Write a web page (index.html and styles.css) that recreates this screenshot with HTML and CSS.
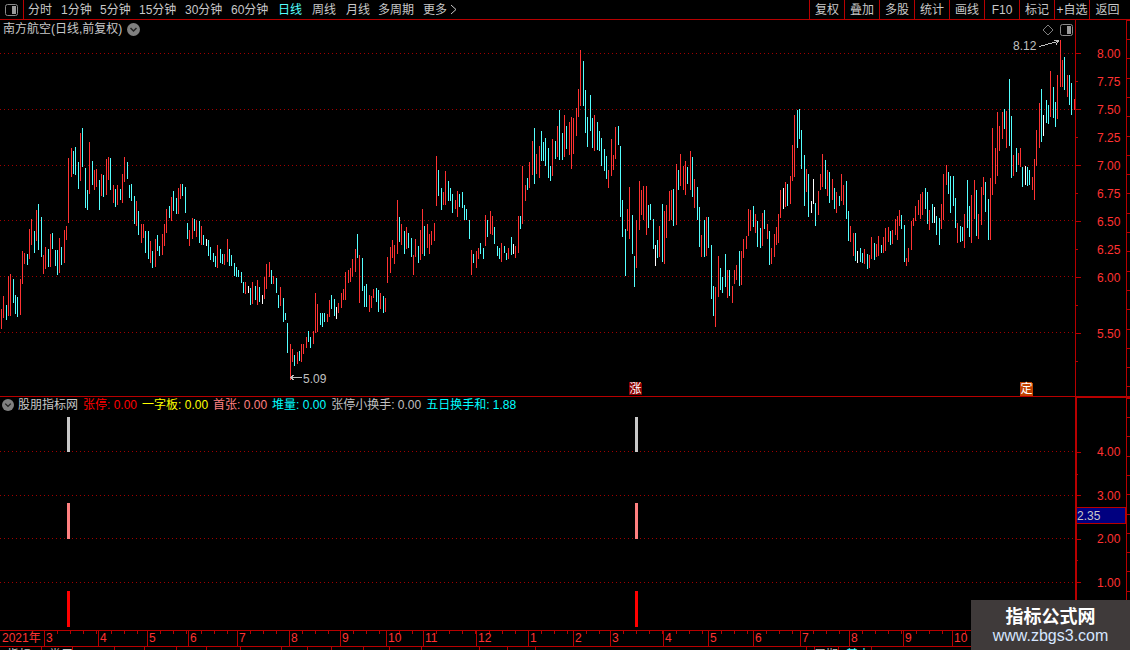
FILE: index.html
```html
<!DOCTYPE html>
<html lang="zh">
<head>
<meta charset="utf-8">
<title>南方航空</title>
<link rel="stylesheet" href="styles.css">
</head>
<body>
<div class="screen">
  <svg class="defs" width="0" height="0"><defs><pattern id="dots" width="4" height="1" patternUnits="userSpaceOnUse"><rect class="dot" width="1" height="1"/></pattern></defs></svg>
  <header class="toolbar">
    <div class="toggle-cell">
      <svg class="icon-panel" width="13" height="12" viewBox="0 0 13 12"><rect class="ip-frame" x="0.5" y="0.5" width="12" height="11" rx="2"/><rect class="ip-fill" x="7" y="2" width="4" height="8"/></svg>
    </div>
    <nav class="periods">
      <span>分时</span><span>1分钟</span><span>5分钟</span><span>15分钟</span><span>30分钟</span><span>60分钟</span><span class="active">日线</span><span>周线</span><span>月线</span><span>多周期</span><span class="more">更多 <svg width="7" height="11" viewBox="0 0 7 11"><path class="more-arrow" d="M1 1l5 4.5-5 4.5"/></svg></span>
    </nav>
    <div class="actions">
      <span>复权</span><span>叠加</span><span>多股</span><span>统计</span><span>画线</span><span>F10</span><span>标记</span><span>+自选</span><span class="last">返回</span>
    </div>
  </header>

  <section class="upper">
    <svg class="chart" width="1130" height="376" viewBox="0 20 1130 376">
      <g class="grid">
        <rect y="53" width="1075" height="1"/><rect y="109" width="1075" height="1"/><rect y="165" width="1075" height="1"/><rect y="220" width="1075" height="1"/><rect y="276" width="1075" height="1"/><rect y="332" width="1075" height="1"/>
      </g>
      <g class="bars" transform="translate(0.17 120) scale(0.33333)">
        <path class="r" d="M4 567V627M10 528V594M25 468V588M31 462V588M61 477V585M67 393V492M73 399V432M88 327V417M94 297V375M109 270V363M130 405V462M136 381V447M151 342V441M178 354V459M193 330V429M199 318V360M205 114V309M214 84V171M241 39V183M268 66V222M283 150V210M289 147V201M304 162V228M319 117V225M325 111V180M340 195V249M352 195V255M367 162V249M373 111V186M409 243V318M424 312V369M430 312V354M451 363V429M466 357V441M487 342V405M493 312V378M499 267V339M514 231V303M535 204V282M541 192V237M568 330V378M577 294V357M589 300V351M604 318V375M652 375V444M673 402V435M682 357V426M736 486V522M757 486V552M772 480V555"/>
        <path class="c" d="M19 555V600M40 477V549M46 525V582M52 531V591M82 402V435M103 333V399M115 252V390M124 291V411M145 387V441M157 339V387M166 390V438M172 390V465M184 381V435M220 93V162M226 81V165M235 126V207M247 24V141M256 144V264M262 210V270M277 123V195M298 180V270M310 165V231M331 114V210M346 207V261M361 207V240M382 126V177M388 195V234M394 192V243M403 228V312M415 273V345M436 333V399M445 333V417M457 393V444M472 345V393M478 378V408M508 258V294M520 213V273M529 234V282M547 192V228M556 201V279M562 309V357M583 297V333M598 303V369M610 345V375M625 360V408M631 381V420M640 399V426M646 408V441M661 387V429M667 402V432M688 387V438M694 405V438M703 429V468M709 441V471M715 450V471M724 456V489M730 486V519M751 504V555M766 498V540M778 501V546"/>
        <path class="w" d="M619 357V378M745 498V519"/>
      </g>
      <g class="bars" transform="translate(260.17 180) scale(0.33333)">
        <path class="r" d="M13 291V357M19 252V327M28 246V291M40 288V312M61 321V378M91 492V600M97 507V546M112 516V552M124 492V546M130 492V522M139 471V504M160 453V492M166 339V459M172 372V456M202 402V426M208 360V411M235 369V399M244 339V384M250 327V360M256 276V360M265 270V309M271 264V306M277 237V291M286 207V276M298 225V369M328 345V396M334 348V384M340 327V354M361 339V387M376 354V396M382 231V309M391 201V279M397 180V234M403 195V252M412 60V222M424 132V195M439 141V207M460 225V285M466 177V231M481 150V240M487 87V222M502 132V204M508 162V222M514 153V195M523 129V183M529 -72V78M550 36V75M556 -27V75M586 60V87M592 33V111M634 210V285M649 213V264M655 204V237M676 105V198M691 93V162M697 108V165M724 189V246M745 204V237M766 198V234M775 108V219"/>
        <path class="c" d="M34 270V312M49 294V339M55 345V384M70 354V426M76 399V420M82 429V519M103 525V558M118 513V543M145 453V486M151 471V504M181 399V435M187 399V441M193 399V426M214 345V387M223 357V408M292 162V234M307 234V333M313 318V381M319 312V381M349 324V366M355 330V396M370 348V399M418 111V186M433 153V222M445 159V204M454 174V231M475 198V249M493 138V228M535 -30V48M544 24V90M565 3V63M571 24V63M577 42V99M598 42V81M607 36V84M613 75V120M619 87V120M628 120V177M640 222V249M661 189V222M670 204V237M682 120V171M703 141V192M712 198V228M718 204V237M733 198V219M739 219V240M754 171V225"/>
        <path class="w" d="M7 345V372M229 381V417M760 192V222"/>
      </g>
      <g class="bars" transform="translate(520.17 40) scale(0.33333)">
        <path class="r" d="M7 378V552M16 435V483M28 366V444M37 303V405M49 342V402M58 318V414M97 297V408M112 258V351M133 225V351M148 246V345M154 231V387M160 234V342M169 204V288M175 147V231M181 30V198M223 225V333M265 390V444M274 297V408M280 345V390M286 261V357M322 507V573M328 441V597M349 540V684M358 423V570M364 450V525M370 438V540M379 438V585M418 558V651M433 513V672M439 495V594M448 453V543M454 450V540M469 372V555M481 342V438M490 378V450M496 363V465M511 333V450M523 417V504M544 585V651M559 531V648M586 741V861M595 648V771M622 690V774M637 738V789M643 690V732M649 675V720M664 633V735M670 597V654M679 588V627M685 507V588M691 510V573M706 522V579M727 519V618M742 552V597M754 624V672M763 582V651M769 561V615M775 522V609"/>
        <path class="c" d="M1 528V567M22 414V450M43 264V432M64 273V363M70 306V363M76 294V378M85 324V414M91 378V423M106 303V357M118 210V360M127 279V360M139 258V327M190 63V198M196 150V279M202 231V321M211 165V273M217 234V324M232 246V330M238 273V333M244 294V378M253 327V393M259 348V417M295 258V315M301 318V531M307 480V591M316 567V708M337 525V642M343 648V741M385 495V564M391 492V540M400 537V627M412 600V654M427 492V666M460 447V558M475 390V450M502 381V432M517 351V471M532 441V540M538 501V621M553 540V651M565 531V624M574 615V777M580 738V828M601 684V750M607 711V759M616 642V741M628 690V768M658 633V738M700 498V561M712 543V621M721 564V624M733 510V567M748 573V675"/>
        <path class="w" d="M406 615V678"/>
      </g>
      <g class="bars" transform="translate(780.17 40) scale(0.33333)">
        <path class="r" d="M1 450V534M16 426V501M31 408V492M37 315V423M43 225V411M79 387V456M115 453V525M121 402V450M127 342V441M142 390V468M157 417V480M169 456V519M184 402V483M190 435V495M211 558V606M220 579V648M253 627V672M268 645V684M274 591V657M289 612V651M295 588V648M310 591V639M316 564V633M325 561V606M337 570V612M346 537V585M352 528V600M358 510V558M379 654V678M385 624V666M394 543V630M400 534V558M406 498V543M415 480V525M421 462V537M427 456V525M448 510V570M484 492V567M490 402V540M499 375V435M532 549V609M553 522V624M574 465V609M583 420V537M595 522V597M604 441V555M610 411V465M631 414V600M637 264V465M646 324V432M652 216V408M658 258V333M667 216V297M679 213V324M700 345V408M715 339V375M721 324V381M757 411V450M763 357V480M769 270V378M778 189V324M811 93V231M832 105V237M841 0V141M847 60V141M862 105V171M883 177V210"/>
        <path class="c" d="M22 432V498M52 210V324M58 207V297M64 270V387M73 345V498M85 402V531M106 489V558M136 360V447M148 396V489M163 444V507M178 468V498M199 423V537M205 513V603M226 579V663M241 624V666M247 639V669M262 642V687M283 609V660M304 615V639M331 573V615M364 525V567M373 555V666M436 444V507M442 456V552M457 492V549M469 528V585M478 534V615M505 396V462M511 408V519M520 408V498M526 474V564M541 558V606M547 561V603M562 420V564M568 498V591M589 450V588M616 426V516M625 477V600M673 207V267M688 117V318M694 228V414M709 324V396M727 381V441M742 381V438M748 390V435M784 147V306M799 180V249M805 195V252M820 141V234M826 186V261M853 51V150M868 105V195M874 129V225"/>
        <path class="w" d="M10 444V507M94 483V519M100 417V492M232 633V669M463 501V549M736 378V435M790 225V288"/>
      </g>

      <g class="axis-lines">
        <path d="M1075.5 20V396M1126.5 20V396"/>
        <path d="M1076 53.5H1081M1076 81.5H1078M1076 109.5H1081M1076 137.5H1078M1076 165.5H1081M1076 193.5H1078M1076 221.5H1081M1076 249.5H1078M1076 277.5H1081M1076 305.5H1078M1076 333.5H1081M1076 361.5H1078"/>
        <path class="edge-ticks" d="M1128 20V396"/>
      </g>
      <g class="axis-labels">
        <text x="1097" y="58">8.00</text><text x="1097" y="86">7.75</text><text x="1097" y="114">7.50</text><text x="1097" y="142">7.25</text><text x="1097" y="170">7.00</text><text x="1097" y="198">6.75</text><text x="1097" y="226">6.50</text><text x="1097" y="254">6.25</text><text x="1097" y="282">6.00</text><text x="1097" y="338">5.50</text>
      </g>

      <g class="annot">
        <text x="1013" y="50">8.12</text>
        <path d="M1039 46.5L1058 41.5M1054 40H1059L1056 45"/>
        <text x="303" y="383">5.09</text>
        <path d="M291 377.5H302M294 375L290.5 377.5L294 380"/>
      </g>
      <path class="diamond" d="M1048 25L1053 30L1048 35L1043 30Z"/>

      <path class="flag flag-zhang" d="M629 382H640L642 384V395H629Z"/>
      <text class="flag-text" x="629.5" y="393">涨</text>
      <path class="flag flag-ding" d="M1020 382H1031L1033 384V396H1020Z"/>
      <text class="flag-text" x="1020.5" y="393">定</text>
    </svg>

    <div class="title-row">
      <span>南方航空(日线,前复权)</span>
      <svg class="chev" width="13" height="13" viewBox="0 0 13 13"><circle class="chev-bg" cx="6.5" cy="6.5" r="6.5"/><path class="chev-mark" d="M3.5 5l3 3 3-3"/></svg>
    </div>
    <svg class="icon-panel corner-icon" width="13" height="12" viewBox="0 0 13 12"><rect class="ip-frame" x="0.5" y="0.5" width="12" height="11" rx="2"/><rect class="ip-fill" x="7" y="2" width="4" height="8"/></svg>
  </section>

  <section class="lower">
    <svg class="chart" width="1130" height="233" viewBox="0 397 1130 233">
      <g class="grid">
        <rect y="451" width="1075" height="1"/><rect y="495" width="1075" height="1"/><rect y="538" width="1075" height="1"/><rect y="582" width="1075" height="1"/>
      </g>
      <rect class="sig-gray" x="67" y="417" width="3" height="35"/>
      <rect class="sig-pink" x="67" y="503" width="3" height="36"/>
      <rect class="sig-red" x="67" y="591" width="3" height="36"/>
      <rect class="sig-gray" x="635" y="417" width="3" height="35"/>
      <rect class="sig-pink" x="635" y="503" width="3" height="36"/>
      <rect class="sig-red" x="635" y="591" width="3" height="36"/>
      <g class="axis-lines">
        <rect class="axis-fill" x="1075" y="397" width="55" height="1"/>
        <rect class="axis-fill" x="1075" y="397" width="2" height="233"/>
        <path d="M1126.5 397V630"/>
        <path d="M1077 452.5H1081M1077 474.5H1078M1077 495.5H1081M1077 517.5H1078M1077 539.5H1081M1077 560.5H1078M1077 582.5H1081M1077 604.5H1078"/>
        <path class="edge-ticks" d="M1128 398V630"/>
      </g>
      <g class="axis-labels">
        <text x="1097" y="456">4.00</text><text x="1097" y="500">3.00</text><text x="1097" y="543">2.00</text><text x="1097" y="587">1.00</text>
      </g>
      <rect class="badge" x="1076.5" y="507.5" width="49" height="16"/>
      <text class="badge-text" x="1077" y="520">2.35</text>
    </svg>

    <div class="legend">
      <svg class="chev" width="12" height="12" viewBox="0 0 13 13"><circle class="chev-bg" cx="6.5" cy="6.5" r="6.5"/><path class="chev-mark" d="M3.5 5l3 3 3-3"/></svg>
      <span class="legend-name">股朋指标网</span>
      <span class="l-red">张停: 0.00</span>
      <span class="l-yellow">一字板: 0.00</span>
      <span class="l-pink">首张: 0.00</span>
      <span class="l-cyan">堆量: 0.00</span>
      <span class="l-gray">张停小换手: 0.00</span>
      <span class="l-cyan">五日换手和: 1.88</span>
    </div>
  </section>

  <footer class="timeline">
    <span class="year">2021年</span><span>3</span><span>4</span><span>5</span><span>6</span><span>7</span><span>8</span><span>9</span><span>10</span><span>11</span><span>12</span><span>1</span><span>2</span><span>3</span><span>4</span><span>5</span><span>6</span><span>7</span><span>8</span><span>9</span><span>10</span>
  </footer>

  <div class="tabs">
    <span class="tab-first">指标</span><span>常用</span><span></span><span></span><span></span><span></span><span></span><span></span><span></span><span></span><span></span><span></span><span></span><span></span><span></span><span></span><span></span><span></span><span>周期</span><span class="tab-on">基本</span><span></span>
  </div>

  <aside class="watermark">
    <div class="wm-title">指标公式网</div>
    <div class="wm-url">www.zbgs3.com</div>
  </aside>
</div>
</body>
</html>
```

FILE: styles.css
```css
* { box-sizing: border-box; }

html, body {
  margin: 0;
  padding: 0;
  background: #000;
}

.screen {
  position: relative;
  width: 1130px;
  height: 650px;
  overflow: hidden;
  background: #000;
  color: #c8c8c8;
  font-family: "Liberation Sans", "Noto Sans CJK SC", sans-serif;
  font-size: 12px;
  line-height: 14px;
}

.defs { position: absolute; }
.dot { fill: #a00000; }

/* toolbar */
.toolbar {
  display: flex;
  height: 20px;
  border-bottom: 1px solid #b80000;
}

.toggle-cell {
  width: 24px;
  flex: none;
  border-right: 1px solid #b80000;
  padding: 4px 0 0 5px;
}

.icon-panel { display: block; }
.ip-frame { fill: #000; stroke: #8a8a8a; stroke-width: 1; }
.ip-fill { fill: #9a9a9a; }

.periods {
  display: grid;
  grid-template-columns: 33px 39px 39px 46px 46px 47px 34px 34px 32px 45px auto;
  padding: 3px 0 0 4px;
  white-space: nowrap;
}

.periods .active { color: #54ffff; }
.more svg { vertical-align: -1px; }
.more-arrow { fill: none; stroke: #c8c8c8; stroke-width: 1; }

.actions {
  display: flex;
  margin-left: auto;
}

.actions span {
  width: 35px;
  border-left: 1px solid #b80000;
  padding-top: 3px;
  text-align: center;
  white-space: nowrap;
}

.actions .last {
  width: 41px;
  padding-right: 5px;
}

/* panels */
.upper {
  position: relative;
  height: 377px;
  border-bottom: 1px solid #b80000;
}

.lower {
  position: relative;
  height: 233px;
}

.chart {
  display: block;
  shape-rendering: crispEdges;
}

.grid rect { fill: url(#dots); }

.bars path { fill: none; stroke-width: 3; }
.bars .r { stroke: #ff3232; }
.bars .c { stroke: #54ffff; }
.bars .w { stroke: #ffffff; }

.axis-lines path { fill: none; stroke: #b80000; stroke-width: 1; }
.axis-lines .edge-ticks { stroke-width: 4; stroke-dasharray: 1 18.3; stroke-dashoffset: -19; }
.axis-fill { fill: #b80000; }

.axis-labels text {
  fill: #ff3232;
  font-size: 12px;
  font-family: "Liberation Sans", sans-serif;
}

.annot text {
  fill: #c0c0c0;
  font-size: 12px;
  font-family: "Liberation Sans", sans-serif;
}

.annot path { fill: none; stroke: #c0c0c0; stroke-width: 1; }
.diamond { fill: none; stroke: #808080; stroke-width: 1; shape-rendering: auto; }

.flag-zhang { fill: #8a0000; }
.flag-ding { fill: #c04000; }
.flag-text {
  fill: #fff;
  font-size: 12px;
  font-family: "Noto Sans CJK SC", sans-serif;
}

.title-row {
  position: absolute;
  left: 3px;
  top: 2px;
  display: flex;
  align-items: center;
  gap: 5px;
}

.chev { display: block; flex: none; }
.chev-bg { fill: #808080; }
.chev-mark { fill: none; stroke: #222; stroke-width: 1.5; }

.corner-icon {
  position: absolute;
  left: 1060px;
  top: 4px;
}

/* indicator */
.legend {
  position: absolute;
  left: 2px;
  top: 1px;
  display: flex;
  align-items: center;
  gap: 5px;
  white-space: nowrap;
}

.legend-name { margin-left: -1px; }
.l-red { color: #ff0000; }
.l-yellow { color: #ffff00; }
.l-pink { color: #ff8080; }
.l-cyan { color: #00ffff; }
.l-gray { color: #c0c0c0; }

.sig-gray { fill: #c8c8c8; }
.sig-pink { fill: #ff8080; }
.sig-red { fill: #ff0000; }

.badge { fill: #000080; stroke: #b80000; stroke-width: 1; }
.badge-text {
  fill: #c8c8c8;
  font-size: 12px;
  font-family: "Liberation Sans", sans-serif;
}

/* timeline */
.timeline {
  display: grid;
  grid-template-columns: 44px 54px 49px 41px 49px 52px 51px 46px 37px 53px 52px 45px 37px 53px 45px 45px 47px 49px 54px 49px 178px;
  height: 17px;
  border-top: 1px solid #b80000;
  border-bottom: 1px solid #b80000;
  color: #ff3232;
}

.timeline span {
  border-left: 1px solid #b80000;
  padding-left: 1px;
  background: repeating-linear-gradient(90deg, transparent 0 12px, #b80000 12px 13px) 0 0 / 100% 3px no-repeat;
}

.timeline .year {
  border-left: 0;
  padding-left: 2px;
  background: none;
}

/* tab strip, clipped by the window edge */
.tabs {
  display: grid;
  grid-template-columns: 42px 31px 42px 30px 32px 30px 34px 41px 26px 24px 32px 26px 32px 58px 28px 28px 271px 0 32px 33px 100px;
  height: 3px;
  overflow: hidden;
}

.tabs span {
  border-right: 1px solid #b80000;
  padding-left: 7px;
  line-height: 16px;
  white-space: nowrap;
}

.tabs .tab-on { color: #54ffff; }

/* watermark */
.watermark {
  position: absolute;
  left: 971px;
  top: 600px;
  width: 159px;
  height: 50px;
  background: #3f3a3a;
  text-align: center;
}

.wm-title {
  margin-top: 4px;
  color: #fff;
  font-size: 18px;
  font-weight: 700;
  line-height: 22px;
  font-family: "Noto Sans CJK SC", sans-serif;
}

.wm-url {
  color: #d6e6ff;
  font-size: 16px;
  line-height: 20px;
}
```
